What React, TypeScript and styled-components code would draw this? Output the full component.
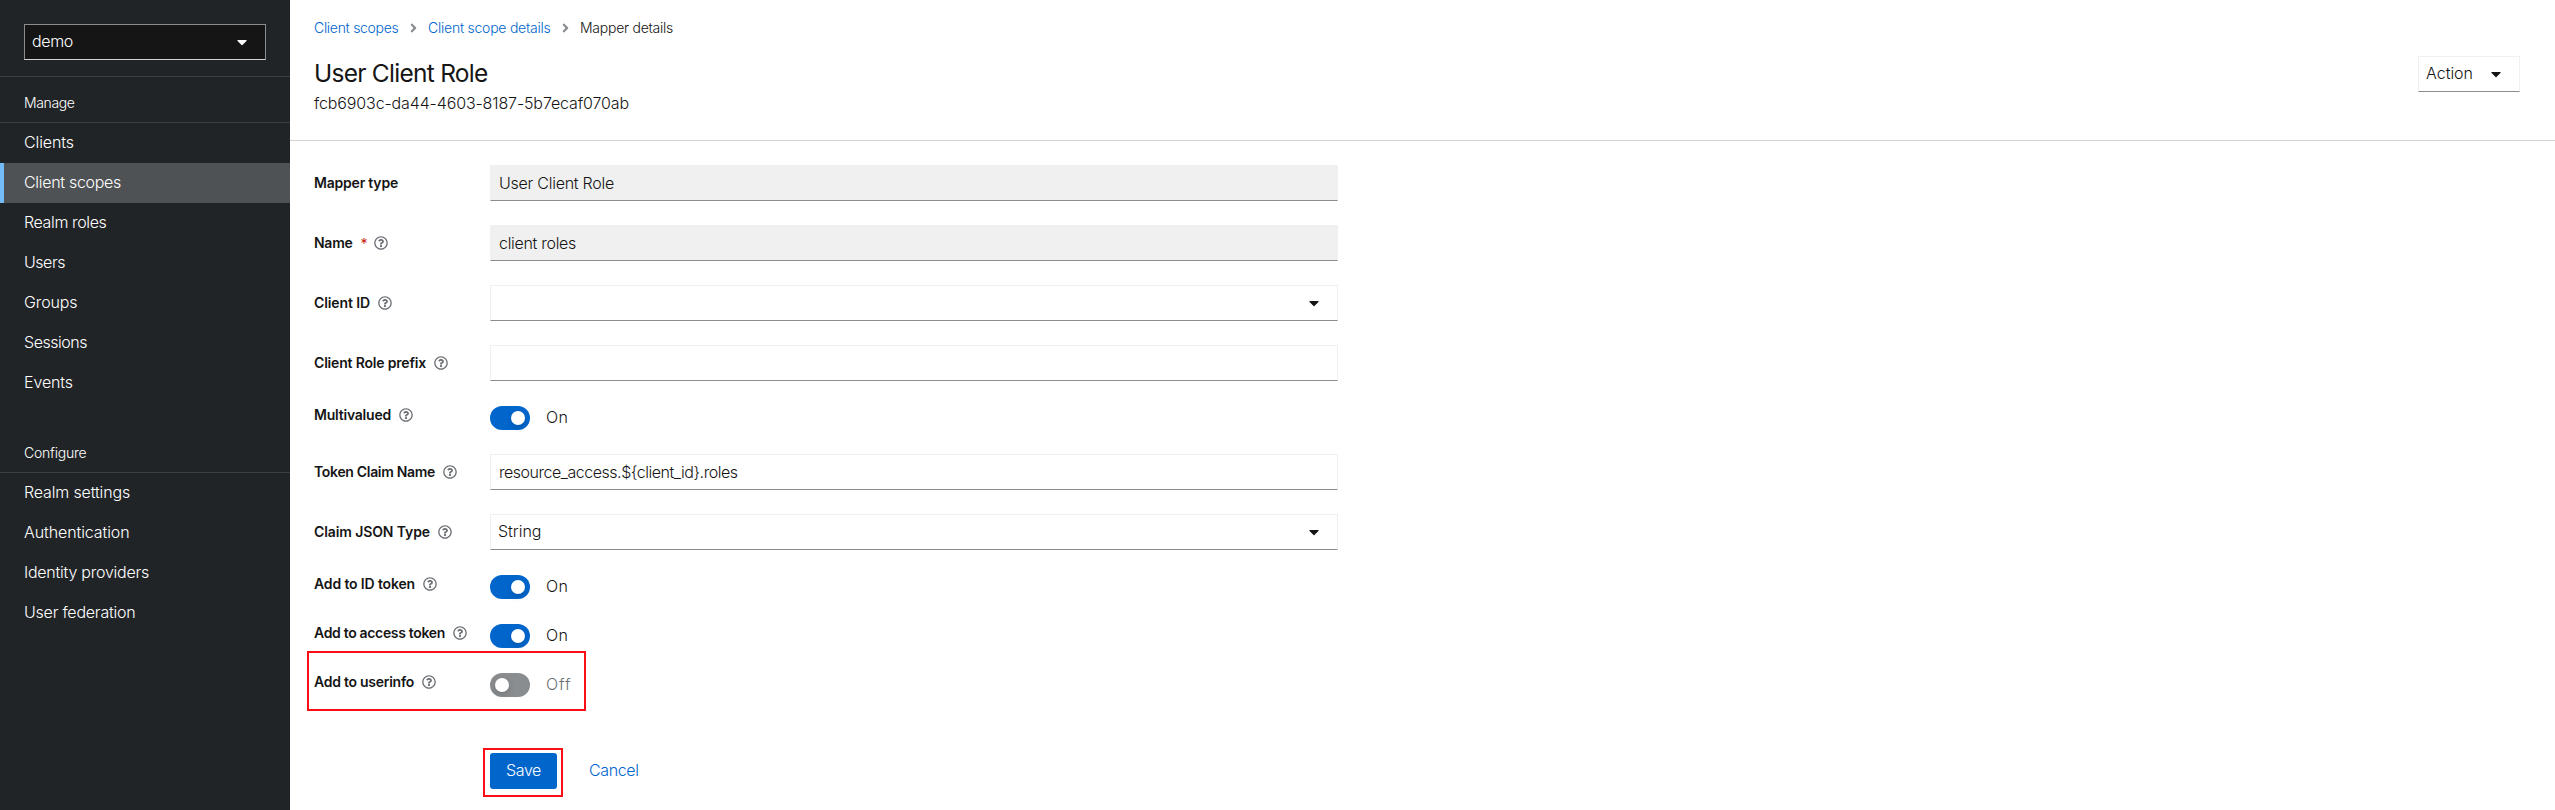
import React, { useLayoutEffect, useRef, useState } from 'react';
import styled, { createGlobalStyle } from 'styled-components';
import { FaAngleRight, FaCaretDown, FaRegQuestionCircle } from 'react-icons/fa';

const GlobalStyle = createGlobalStyle`
  *, *::before, *::after { box-sizing: border-box; }
  body {
    margin: 0;
    font-family: Inter, "Liberation Sans", sans-serif;
    font-size: 16px;
    font-weight: 350;
    line-height: 24px;
    color: #151515;
    background: #fff;
  }
`;

const FittedText = styled.span`
  display: inline-block;
  white-space: pre;
  transform: translateY(-1px);
`;

/* Tracks a string out (or in) so that it fills the given measure. */
function Fit({ text, width }: { text: string; width: number }) {
  const ref = useRef<HTMLSpanElement>(null);
  const [tracking, setTracking] = useState(0);
  useLayoutEffect(() => {
    if (!ref.current) return;
    const natural = ref.current.getBoundingClientRect().width;
    setTracking((width - natural) / text.length);
  }, [text, width]);
  return <FittedText ref={ref} style={{ letterSpacing: tracking }}>{text}</FittedText>;
}

const Page = styled.div`
  display: flex;
  height: 810px;
  overflow: hidden;
`;

const Sidebar = styled.nav`
  width: 290px;
  flex: none;
  background: #212427;
  color: #fff;
`;

const RealmBar = styled.div`
  height: 77px;
  padding: 24px 24px 0;
  border-bottom: 1px solid #3c3f42;
`;

const RealmSelect = styled.button`
  display: flex;
  align-items: center;
  justify-content: space-between;
  width: 242px;
  height: 36px;
  padding: 0 18px 0 7px;
  border: 1px solid #8a8d90;
  border-bottom-color: #d2d2d2;
  background: #151515;
  color: #fff;
  font: inherit;
`;

const NavSection = styled.section`
  margin-bottom: 24px;
`;

const NavTitle = styled.h2`
  display: flex;
  align-items: flex-end;
  height: 46px;
  margin: 0;
  padding: 0 24px 8px;
  border-bottom: 1px solid #3c3f42;
  font-size: 14px;
  line-height: 21px;
  font-weight: 350;
`;

const NavItem = styled.a<{ $current?: boolean }>`
  display: flex;
  align-items: center;
  height: 40px;
  padding-left: ${(p) => (p.$current ? 20 : 24)}px;
  border-left: ${(p) => (p.$current ? '4px solid #73bcf7' : '0')};
  background: ${(p) => (p.$current ? '#4f5255' : 'transparent')};
`;

const Main = styled.main`
  flex: 1;
`;

const Header = styled.header`
  display: flex;
  justify-content: space-between;
  height: 141px;
  padding: 18px 35px 0 24px;
  border-bottom: 1px solid #d2d2d2;
`;

const Breadcrumb = styled.div`
  display: flex;
  align-items: center;
  height: 21px;
  font-size: 14px;
  line-height: 21px;
  color: #151515;
`;

const Crumb = styled.a`
  color: #06c;
`;

const Divider = styled(FaAngleRight)`
  width: 9px;
  height: 14px;
  margin: -1px 10px 0 10.5px;
  color: #8a8d90;
`;

const Title = styled.h1`
  margin: 19px 0 0;
  font-size: 24.5px;
  line-height: 32px;
  font-weight: 400;
`;

const Subtitle = styled.div`
  margin-top: 2px;
`;

const ActionButton = styled.button`
  display: flex;
  align-items: center;
  justify-content: space-between;
  width: 102px;
  height: 36px;
  margin-top: 38px;
  padding: 0 18px 0 7px;
  border: 1px solid #f0f0f0;
  border-bottom-color: #8a8d90;
  background: #fff;
  color: #151515;
  font: inherit;
`;

const Caret = styled(FaCaretDown)`
  width: 10px;
  height: 16px;
  margin-top: -1px;
`;

const Form = styled.form`
  display: flex;
  flex-direction: column;
  gap: 24px;
  padding: 24px;
`;

const Row = styled.div`
  position: relative;
  display: grid;
  grid-template-columns: 176px 848px;
  width: 1024px;
`;

const Label = styled.label<{ $inset: number }>`
  display: flex;
  align-items: center;
  height: 21px;
  margin-top: ${(p) => p.$inset}px;
  font-size: 14px;
  line-height: 21px;
  font-weight: 600;
`;

const Required = styled.span`
  margin-left: 8px;
  width: 5px;
  color: #c9190b;
  font-weight: 400;
`;

const Help = styled(FaRegQuestionCircle)`
  width: 14px;
  height: 14px;
  margin: -1px 0 0 8px;
  color: #6a6e73;
`;

const Field = styled.div<{ $readOnly?: boolean; $select?: boolean }>`
  display: flex;
  align-items: center;
  justify-content: space-between;
  height: 36px;
  padding: ${(p) => (p.$select ? '0 18px 0 7px' : '1px 8px 0')};
  border: 1px solid #f0f0f0;
  border-bottom-color: #8a8d90;
  background: ${(p) => (p.$readOnly ? '#f0f0f0' : '#fff')};
`;

const SwitchCell = styled.div<{ $on: boolean }>`
  display: flex;
  align-items: center;
  gap: 16px;
  height: 25px;
  padding-top: 1px;
  color: ${(p) => (p.$on ? '#151515' : '#6a6e73')};
`;

const Track = styled.span<{ $on: boolean }>`
  display: flex;
  align-items: center;
  justify-content: ${(p) => (p.$on ? 'flex-end' : 'flex-start')};
  width: 40px;
  height: 24px;
  padding: 0 5px;
  border-radius: 12px;
  background: ${(p) => (p.$on ? '#06c' : '#8a8d90')};
`;

const Knob = styled.span`
  width: 14px;
  height: 14px;
  border-radius: 50%;
  background: #fff;
  box-shadow: 0 3px 6px rgba(3, 3, 3, 0.16);
`;

const Highlight = styled.span<{ $box: string }>`
  position: absolute;
  inset: ${(p) => p.$box};
  border: 2px solid #fa0f14;
  pointer-events: none;
`;

const Actions = styled.div`
  display: flex;
  align-items: center;
  margin: 32px 0 0 176px;
`;

const SaveWrap = styled.div`
  position: relative;
`;

const SaveButton = styled.button`
  display: block;
  width: 67px;
  height: 36px;
  padding: 0;
  border: 0;
  border-radius: 3px;
  background: #06c;
  color: #fff;
  font: inherit;
`;

const CancelLink = styled.a`
  margin-left: 32px;
  color: #06c;
`;

type Item = [string, number];

const manage: Item[] = [
  ['Clients', 50],
  ['Client scopes', 97],
  ['Realm roles', 82.5],
  ['Users', 41],
  ['Groups', 53.5],
  ['Sessions', 63],
  ['Events', 49],
];

const configure: Item[] = [
  ['Realm settings', 106],
  ['Authentication', 105.5],
  ['Identity providers', 125],
  ['User federation', 111.5],
];

type FieldRow = {
  label: Item;
  kind: 'readonly' | 'text' | 'select' | 'switch';
  value?: Item;
  on?: boolean;
  required?: boolean;
  help?: boolean;
  highlight?: boolean;
};

const rows: FieldRow[] = [
  { label: ['Mapper type', 84], kind: 'readonly', value: ['User Client Role', 115], help: false },
  { label: ['Name', 38.5], kind: 'readonly', value: ['client roles', 77], required: true },
  { label: ['Client ID', 56], kind: 'select' },
  { label: ['Client Role prefix', 112], kind: 'text' },
  { label: ['Multivalued', 77], kind: 'switch', on: true },
  { label: ['Token Claim Name', 121], kind: 'text', value: ['resource_access.${client_id}.roles', 238.5] },
  { label: ['Claim JSON Type', 116], kind: 'select', value: ['String', 43.5] },
  { label: ['Add to ID token', 101], kind: 'switch', on: true },
  { label: ['Add to access token', 131], kind: 'switch', on: true },
  { label: ['Add to userinfo', 100], kind: 'switch', on: false, highlight: true },
];

function Control({ row }: { row: FieldRow }) {
  if (row.kind === 'switch') {
    const on = !!row.on;
    return (
      <SwitchCell $on={on}>
        <Track $on={on}><Knob /></Track>
        <Fit text={on ? 'On' : 'Off'} width={on ? 22.5 : 25.5} />
      </SwitchCell>
    );
  }
  return (
    <Field $readOnly={row.kind === 'readonly'} $select={row.kind === 'select'}>
      {row.value ? <Fit text={row.value[0]} width={row.value[1]} /> : <span />}
      {row.kind === 'select' && <Caret />}
    </Field>
  );
}

export default function App() {
  return (
    <Page>
      <GlobalStyle />
      <Sidebar>
        <RealmBar>
          <RealmSelect>
            <Fit text="demo" width={41} />
            <Caret />
          </RealmSelect>
        </RealmBar>
        <NavSection>
          <NavTitle><Fit text="Manage" width={50.5} /></NavTitle>
          {manage.map(([text, width]) => (
            <NavItem key={text} $current={text === 'Client scopes'}><Fit text={text} width={width} /></NavItem>
          ))}
        </NavSection>
        <NavSection>
          <NavTitle><Fit text="Configure" width={62.5} /></NavTitle>
          {configure.map(([text, width]) => (
            <NavItem key={text}><Fit text={text} width={width} /></NavItem>
          ))}
        </NavSection>
      </Sidebar>
      <Main>
        <Header>
          <div>
            <Breadcrumb>
              <Crumb><Fit text="Client scopes" width={84.5} /></Crumb>
              <Divider />
              <Crumb><Fit text="Client scope details" width={122.5} /></Crumb>
              <Divider />
              <Fit text="Mapper details" width={93} />
            </Breadcrumb>
            <Title><Fit text="User Client Role" width={173.5} /></Title>
            <Subtitle><Fit text="fcb6903c-da44-4603-8187-5b7ecaf070ab" width={315} /></Subtitle>
          </div>
          <ActionButton>
            <Fit text="Action" width={47} />
            <Caret />
          </ActionButton>
        </Header>
        <Form>
          {rows.map((row) => (
            <Row key={row.label[0]}>
              <Label $inset={row.kind === 'switch' ? 0 : 8}>
                <Fit text={row.label[0]} width={row.label[1]} />
                {row.required && <Required>*</Required>}
                {row.help !== false && <Help />}
              </Label>
              <Control row={row} />
              {row.highlight && <Highlight $box="-21px 752px -14px -7px" />}
            </Row>
          ))}
          <Actions>
            <SaveWrap>
              <SaveButton type="button"><Fit text="Save" width={35} /></SaveButton>
              <Highlight $box="-5px -6px -8px -7px" />
            </SaveWrap>
            <CancelLink><Fit text="Cancel" width={49.5} /></CancelLink>
          </Actions>
        </Form>
      </Main>
    </Page>
  );
}
